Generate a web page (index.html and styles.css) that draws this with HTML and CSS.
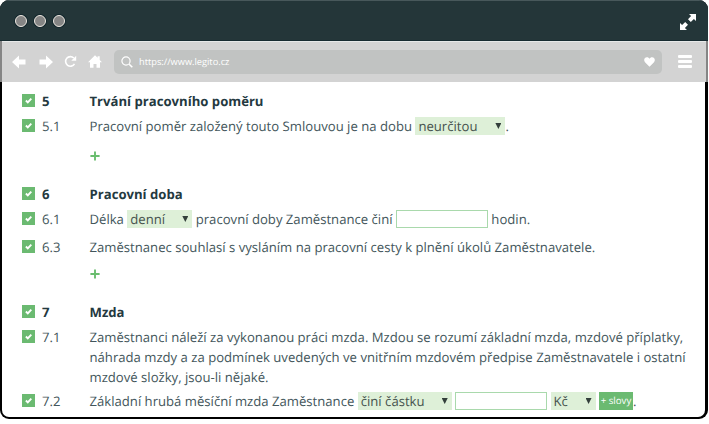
FILE: index.html
```
<!DOCTYPE html>
<html lang="cs">
<head>
<meta charset="utf-8">
<title>Legito</title>
<link rel="stylesheet" href="styles.css">
</head>
<body>
<svg class="defs" width="0" height="0"><symbol id="check" viewBox="0 0 13 13"><path d="M3.9 6.5 5.8 8.4 9.3 4.7" fill="none" stroke="#fff" stroke-width="1.9"/></symbol>
<symbol id="plus" viewBox="0 0 10 10"><path d="M5 .4V9.6M.4 5H9.6" stroke="#69bd6e" stroke-width="1.9"/></symbol></svg>
<div class="window">
  <header class="titlebar">
    <div class="dots"><i></i><i></i><i></i></div>
    <svg class="expand" width="16" height="16" viewBox="0 0 16 16"><path d="M9 0H16V7L13.9 4.9 10.8 8 8 5.2 11.1 2.1ZM0 9 2.1 11.1 5.2 8 8 10.8 4.9 13.9 7 16H0Z" fill="#fff"/></svg>
  </header>
  <nav class="toolbar">
    <svg class="back" width="14" height="14" viewBox="0 0 14 14"><path d="M0 7 7 .5V4.4H13.5V9.6H7V13.5Z" fill="#fff"/></svg>
    <svg class="forward" width="14" height="14" viewBox="0 0 14 14"><path d="M14 7 7 .5V4.4H.5V9.6H7V13.5Z" fill="#fff"/></svg>
    <svg class="reload" width="13" height="13" viewBox="0 0 13 13"><path d="M9.8 3A4.8 4.8 0 1 0 10.5 8.9" fill="none" stroke="#fff" stroke-width="1.6"/><path d="M12.2.8V5.7H7.3Z" fill="#fff"/></svg>
    <svg class="home" width="14" height="13" viewBox="0 0 14 13"><path d="M7 .3 9.6 2.8V1.2H11.7V4.9L14 7.2H12V12.7H8.5V9H5.5V12.7H2V7.2H0Z" fill="#fff"/></svg>
    <div class="address">
      <svg width="12" height="12" viewBox="0 0 12 12"><circle cx="5" cy="5" r="4.1" fill="none" stroke="#fff" stroke-width="1.2"/><path d="M8.2 8.2 11.3 11.3" stroke="#fff" stroke-width="1.6"/></svg>
      <span>https://www.legito.cz</span>
      <svg class="heart" width="11" height="10" viewBox="0 0 11 10"><path d="M5.5 9.7 1 5.2C-.8 3 .6.2 2.9.2 4.2.2 5 .9 5.5 1.8 6 .9 6.8.2 8.1.2 10.4.2 11.8 3 10 5.2Z" fill="#fff"/></svg>
    </div>
    <div class="menu"><i></i><i></i><i></i></div>
  </nav>
  <main>
    <div class="row title"><svg class="cb"><use href="#check"/></svg><span>5</span><p>Trvání pracovního poměru</p></div>
    <div class="row g5"><svg class="cb"><use href="#check"/></svg><span>5.1</span><p>Pracovní poměr založený touto Smlouvou je na dobu <span class="select w90">neurčitou</span>.</p></div>
    <div class="add g10"><svg width="10" height="10"><use href="#plus"/></svg></div>
    <div class="row title g18"><svg class="cb"><use href="#check"/></svg><span>6</span><p>Pracovní doba</p></div>
    <div class="row g5"><svg class="cb"><use href="#check"/></svg><span>6.1</span><p>Délka <span class="select w65">denní</span> pracovní doby Zaměstnance činí <span class="field"></span> hodin.</p></div>
    <div class="row g8"><svg class="cb"><use href="#check"/></svg><span>6.3</span><p>Zaměstnanec souhlasí s vysláním na pracovní cesty k plnění úkolů Zaměstnavatele.</p></div>
    <div class="add g7"><svg width="10" height="10"><use href="#plus"/></svg></div>
    <div class="row title g18"><svg class="cb"><use href="#check"/></svg><span>7</span><p>Mzda</p></div>
    <div class="row g5"><svg class="cb"><use href="#check"/></svg><span>7.1</span><p>Zaměstnanci náleží za vykonanou práci mzda. Mzdou se rozumí základní mzda, mzdové příplatky,<br>náhrada mzdy a za podmínek uvedených ve vnitřním mzdovém předpise Zaměstnavatele i ostatní<br>mzdové složky, jsou-li nějaké.</p></div>
    <div class="row g4"><svg class="cb"><use href="#check"/></svg><span>7.2</span><p>Základní hrubá měsíční mzda Zaměstnance <span class="select w94">činí částku</span> <span class="field"></span> <span class="select w45">Kč</span> <span class="words">+ slovy</span>.</p></div>
  </main>
</div>
</body>
</html>
```
FILE: styles.css
```
* { box-sizing: border-box; }
body { margin: 0; background: #fff; font-family: "Open Sans", "Noto Sans", sans-serif; text-rendering: geometricPrecision; }
svg { display: block; flex: none; }
.defs { position: absolute; }
.window { width: 708px; height: 419px; border-radius: 9px; background: #000; overflow: hidden; display: flex; flex-direction: column; }
.titlebar { height: 41px; flex: none; background: #243639; border-top: 1px solid #48585b; border-bottom: 1px solid #172b30; display: flex; justify-content: space-between; padding: 0 12px 0 15px; }
.dots { display: flex; gap: 7px; padding-top: 14px; }
.dots i { width: 12px; height: 12px; border-radius: 50%; background: #858585; border: 1px solid #eee9e2; box-shadow: 0 0 0 1px #14282e; }
.expand { margin-top: 13px; }
.toolbar { height: 41px; flex: none; background: #d3d3d3; border-left: 2px solid #858585; border-right: 2px solid #858585; box-shadow: inset 0 1px #e6e8e8; display: flex; align-items: center; padding-left: 10px; }
.forward { margin-left: 13px; }
.reload { margin-left: 11px; }
.home { margin-left: 11px; }
.address { width: 548px; height: 24px; margin-left: 12px; background: #c1c3c2; border-radius: 5px; display: flex; align-items: center; padding: 0 7px; color: #fff; font-size: 9.25px; }
.address span { margin-left: 6px; }
.heart { margin-left: auto; }
.menu { margin-left: 16px; display: grid; gap: 2px; }
.menu i { width: 14px; height: 3px; background: #fff; border-radius: 1px; }
main { flex: 1; margin: 0 3px 2px 2px; padding: 9px 0 0 20px; background: #fff; border-radius: 0 0 7px 7px; color: #43565b; font-size: 13.13px; line-height: 20px; }
.row { display: grid; grid-template-columns: 20px 47.5px 1fr; white-space: nowrap; }
.row p { margin: 0; }
.title { color: #24393f; font-weight: 700; }
.cb { width: 13px; height: 13px; margin-top: 3px; background: #6bba71; }
.add { height: 20px; padding: 5px 0 0 68px; }
.g4 { margin-top: 4px; }
.g5 { margin-top: 5px; }
.g7 { margin-top: 7px; }
.g8 { margin-top: 8px; }
.g10 { margin-top: 10px; }
.g18 { margin-top: 18px; }
.select { display: inline-flex; justify-content: space-between; height: 18px; line-height: 18px; padding: 0 4px 0 3px; background: #def0d8; vertical-align: top; margin-top: 1px; color: #46534e; }
.select::after { content: ""; width: 6px; height: 6px; margin-top: 6px; background: #333f3b; clip-path: polygon(0 0, 100% 0, 50% 100%); }
.w90 { width: 90px; }
.w65 { width: 65px; }
.w94 { width: 94px; }
.w45 { width: 45px; }
.field { display: inline-block; width: 92px; height: 18px; border: 1px solid #a9d9ac; vertical-align: top; margin-top: 1px; }
.words { display: inline-block; width: 34px; height: 18px; margin-top: 1px; background: #6bba71; color: #fff; font-size: 9.7px; line-height: 17px; text-align: center; vertical-align: top; }
```
